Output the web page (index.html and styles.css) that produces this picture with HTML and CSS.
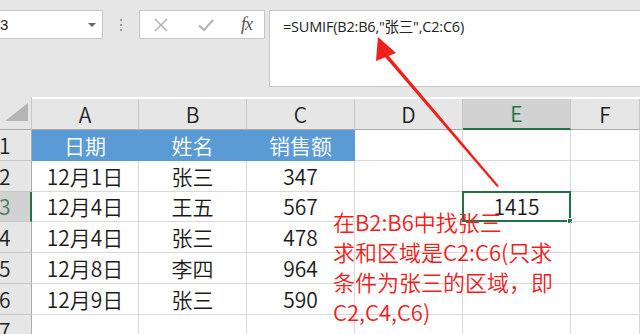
FILE: index.html
```html
<!DOCTYPE html>
<html lang="zh-CN">
<head>
<meta charset="utf-8">
<title>SUMIF</title>
<link rel="stylesheet" href="styles.css">
</head>
<body>
<div class="app">
  <div class="topbar">
    <div class="namebox"><span class="name">E3</span><span class="drop"></span></div>
    <div class="grip"><i></i><i></i><i></i></div>
    <div class="btns">
      <svg class="ico" width="18" height="18" viewBox="0 0 18 18"><path d="M3 3 L15 15 M15 3 L3 15" stroke="#b4b4b4" stroke-width="1.6" fill="none"/></svg>
      <svg class="ico" width="18" height="18" viewBox="0 0 18 18"><path d="M2 9.5 L7 14 L16 4" stroke="#b4b4b4" stroke-width="2" fill="none"/></svg>
      <span class="fx">fx</span>
    </div>
    <div class="formula">=SUMIF(B2:B6,"张三",C2:C6)</div>
  </div>
  <div class="sheet">
    <div class="corner"><span class="tri"></span></div>
    <div class="ch">A</div><div class="ch">B</div><div class="ch">C</div><div class="ch">D</div><div class="ch sel">E</div><div class="ch">F</div>

    <div class="rh">1</div>
    <div class="c hd">日期</div><div class="c hd">姓名</div><div class="c hd">销售额</div><div class="c"></div><div class="c"></div><div class="c"></div>

    <div class="rh">2</div>
    <div class="c">12月1日</div><div class="c">张三</div><div class="c">347</div><div class="c"></div><div class="c"></div><div class="c"></div>

    <div class="rh sel">3</div>
    <div class="c">12月4日</div><div class="c">王五</div><div class="c">567</div><div class="c"></div><div class="c active">1415<span class="handle"></span></div><div class="c"></div>

    <div class="rh">4</div>
    <div class="c">12月4日</div><div class="c">张三</div><div class="c">478</div><div class="c"></div><div class="c"></div><div class="c"></div>

    <div class="rh">5</div>
    <div class="c">12月8日</div><div class="c">李四</div><div class="c">964</div><div class="c"></div><div class="c"></div><div class="c"></div>

    <div class="rh">6</div>
    <div class="c">12月9日</div><div class="c">张三</div><div class="c">590</div><div class="c"></div><div class="c"></div><div class="c"></div>

    <div class="rh r7">7</div>
    <div class="c r7"></div><div class="c r7"></div><div class="c r7"></div><div class="c r7"></div><div class="c r7"></div><div class="c r7"></div>
  </div>

  <div class="note">在B2:B6中找张三<br>求和区域是C2:C6(只求<br>条件为张三的区域，即<br>C2,C4,C6)</div>

  <svg class="arrow" width="640" height="334" viewBox="0 0 640 334">
    <polygon points="499,186 497,187 385,57 388,55" fill="#f0211c"/>
    <polygon points="378,37 396,53 376,61" fill="#f0211c"/>
  </svg>
</div>
</body>
</html>
```
FILE: styles.css
```css
* { box-sizing: border-box; }
html, body { margin: 0; padding: 0; }
body {
  width: 640px;
  height: 334px;
  overflow: hidden;
  background: #e6e6e6;
  font-family: "Noto Sans CJK SC", "Noto Sans", sans-serif;
}
.app { position: relative; width: 640px; height: 334px; overflow: hidden; }

.topbar {
  height: 97px;
  display: flex;
  align-items: flex-start;
  padding-top: 10px;
}
.namebox {
  width: 103px;
  height: 29px;
  background: #fff;
  border: 1px solid #c6c6c6;
  border-left: none;
  display: flex;
  align-items: center;
  justify-content: space-between;
  padding-right: 6px;
  overflow: hidden;
}
.name {
  font-family: "Liberation Sans", Arial, sans-serif;
  font-size: 15px;
  color: #222;
  margin-left: -10px;
}
.drop {
  width: 0; height: 0;
  border-left: 4px solid transparent;
  border-right: 4px solid transparent;
  border-top: 4px solid #666;
}
.grip {
  width: 36px;
  height: 29px;
  display: flex;
  flex-direction: column;
  align-items: center;
  justify-content: center;
  gap: 3px;
}
.grip i { width: 2px; height: 2px; background: #9a9a9a; display: block; }
.btns {
  width: 126px;
  height: 29px;
  background: #fff;
  border: 1px solid #c6c6c6;
  display: flex;
  align-items: center;
  justify-content: space-between;
  padding: 0 12px 0 12px;
}
.ico { display: block; }
.fx {
  font-family: "Liberation Serif", "Times New Roman", serif;
  font-style: italic;
  font-size: 18px;
  color: #555;
  letter-spacing: -1px;
}
.formula {
  margin-left: 4px;
  flex: 1;
  height: 77px;
  background: #fff;
  border: 1px solid #c6c6c6;
  border-right: none;
  padding: 4px 0 0 13px;
  font-family: "Open Sans", "Noto Sans CJK SC", sans-serif;
  font-size: 14.5px;
  color: #222;
  letter-spacing: -0.2px;
}

.sheet {
  display: grid;
  grid-template-columns: 32px 107px 108px 108px 108px 108px 69px;
  grid-template-rows: 33px 31px 31px 30px 31px 31px 31px 31px;
  background: #fff;
  font-weight: 350;
}
.corner, .ch, .rh {
  background: #e6e6e6;
}
.corner {
  border-bottom: 1px solid #ababab;
  border-right: 1px solid #c6c6c6;
  position: relative;
}
.tri {
  position: absolute;
  right: 3px;
  bottom: 8px;
  width: 0; height: 0;
  border-left: 23px solid transparent;
  border-bottom: 18px solid #b5b5b5;
}
.ch {
  border-right: 1px solid #c6c6c6;
  border-bottom: 1px solid #ababab;
  margin-top: 2px;
  display: flex;
  align-items: center;
  justify-content: center;
  font-size: 21px;
  color: #222;
  line-height: 1;
}
.ch.sel {
  background: #d2d2d2;
  color: #217346;
  border-bottom: 2px solid #217346;
}
.rh {
  border-bottom: 1px solid #c6c6c6;
  border-right: 1px solid #ababab;
  display: flex;
  align-items: center;
  font-size: 21px;
  color: #222;
  line-height: 1;
  text-indent: -1px;
}
.rh.sel {
  background: #d2d2d2;
  color: #4d7a5e;
  border-right: 2px solid #217346;
}
.c {
  border-right: 1px solid #d9d9d9;
  border-bottom: 1px solid #d9d9d9;
  display: flex;
  align-items: center;
  justify-content: center;
  font-size: 21px;
  color: #1a1a1a;
  line-height: 1;
  position: relative;
}
.c.hd {
  background: #5b9bd5;
  color: #fff;
  border-right-color: #5b9bd5;
  border-bottom-color: #5b9bd5;
}
.c.active {
  border: 2px solid #217346;
  margin: -1px 0 0 -1px;
}
.handle {
  position: absolute;
  right: -4px;
  bottom: -4px;
  width: 6px;
  height: 6px;
  background: #217346;
  border: 1px solid #fff;
}

.note {
  position: absolute;
  left: 333px;
  top: 206px;
  font-size: 22px;
  line-height: 30px;
  font-weight: 350;
  color: #f0211c;
  white-space: nowrap;
}
.arrow { position: absolute; left: 0; top: 0; pointer-events: none; }
```
